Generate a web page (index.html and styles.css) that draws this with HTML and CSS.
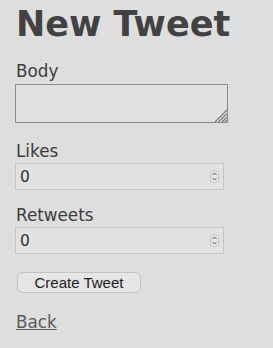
FILE: index.html
```html
<!DOCTYPE html>
<html lang="en">
<head>
    <meta charset="UTF-8">
    <meta name="viewport" content="width=device-width, initial-scale=1.0">
    <title>New Tweet</title>
    <link rel="stylesheet" href="styles.css">
</head>
<body>
    <h1>New Tweet</h1>

    <form class="tweet-form">
        <div class="field field-body">
            <label for="tweet_body">Body</label>
            <textarea id="tweet_body" name="tweet[body]"></textarea>
        </div>

        <div class="field">
            <label for="tweet_likes">Likes</label>
            <div class="number-box">
                <input type="text" id="tweet_likes" name="tweet[likes]" value="0">
                <svg class="spinner" width="9" height="13" viewBox="0 0 9 13">
                    <rect x="0.5" y="0.5" width="8" height="12" rx="3" fill="#e6e6e6" stroke="#c4c4c4"/>
                    <path d="M2.5 5 L4.5 3 L6.5 5" fill="none" stroke="#555" stroke-width="1"/>
                    <path d="M2.5 8 L4.5 10 L6.5 8" fill="none" stroke="#555" stroke-width="1"/>
                </svg>
            </div>
        </div>

        <div class="field">
            <label for="tweet_retweets">Retweets</label>
            <div class="number-box">
                <input type="text" id="tweet_retweets" name="tweet[retweets]" value="0">
                <svg class="spinner" width="9" height="13" viewBox="0 0 9 13">
                    <rect x="0.5" y="0.5" width="8" height="12" rx="3" fill="#e6e6e6" stroke="#c4c4c4"/>
                    <path d="M2.5 5 L4.5 3 L6.5 5" fill="none" stroke="#555" stroke-width="1"/>
                    <path d="M2.5 8 L4.5 10 L6.5 8" fill="none" stroke="#555" stroke-width="1"/>
                </svg>
            </div>
        </div>

        <div class="actions">
            <button type="button" class="submit">Create Tweet</button>
        </div>
    </form>

    <a class="back" href="#">Back</a>
</body>
</html>
```

FILE: styles.css
```css
/* plain scaffold look */
body {
    font-family: "DejaVu Sans", Verdana, sans-serif;
    font-size: 16.8px;
    color: #3c3c3c;
    background-color: #dedede;
    margin: 0;
    padding: 0 16px;
}

h1 {
    font-size: 35px;
    line-height: 40px;
    color: #424242;
    margin: 4px 0 0;
}

.tweet-form {
    margin-top: 18px;
    display: flex;
    flex-direction: column;
    gap: 16px;
}

.field label {
    display: block;
    line-height: 19px;
    margin-bottom: 2px;
}

.field-body label {
    margin-bottom: 3px;
}

.field-body {
    margin-bottom: 3px;
}

/* hatched resize corner drawn as svg background */
textarea {
    display: block;
    box-sizing: border-box;
    width: 213px;
    height: 39px;
    margin: 0 0 0 -1px;
    border: 1px solid #8c8c8c;
    background-color: #e0e0e0;
    background-image: url("data:image/svg+xml,%3Csvg xmlns='http://www.w3.org/2000/svg' width='13' height='13' viewBox='0 0 13 13'%3E%3Cpath d='M13 1 L1 13 M13 4.5 L4.5 13 M13 8 L8 13 M13 11 L11 13' stroke='%23727272' stroke-width='1.1' fill='none'/%3E%3C/svg%3E");
    background-size: 13px 13px;
    background-position: right 0 bottom 0;
    background-repeat: no-repeat;
    resize: none;
    font-family: "DejaVu Sans", sans-serif;
    font-size: 14px;
}

.number-box {
    box-sizing: border-box;
    width: 209px;
    height: 27px;
    margin-left: -1px;
    display: flex;
    align-items: center;
    border: 1px solid #c6c6c6;
    background-color: #e2e2e2;
    padding: 0 4px;
}

.number-box input {
    flex: 1;
    min-width: 0;
    border: none;
    background: transparent;
    padding: 0;
    font-family: "DejaVu Sans", sans-serif;
    font-size: 15.5px;
    color: #333;
    outline: none;
}

.spinner {
    display: block;
}

.actions {
    margin-top: 2px;
}

.submit {
    display: block;
    box-sizing: border-box;
    width: 124px;
    height: 21px;
    margin-left: 1px;
    padding: 0;
    font-family: "Liberation Sans", Arial, sans-serif;
    font-size: 15px;
    color: #222;
    background-color: #e5e5e5;
    border: 1px solid #c2c2c2;
    border-radius: 6px;
}

.back {
    display: inline-block;
    margin-top: 19px;
    line-height: 20px;
    color: #5a5a5a;
}
```
